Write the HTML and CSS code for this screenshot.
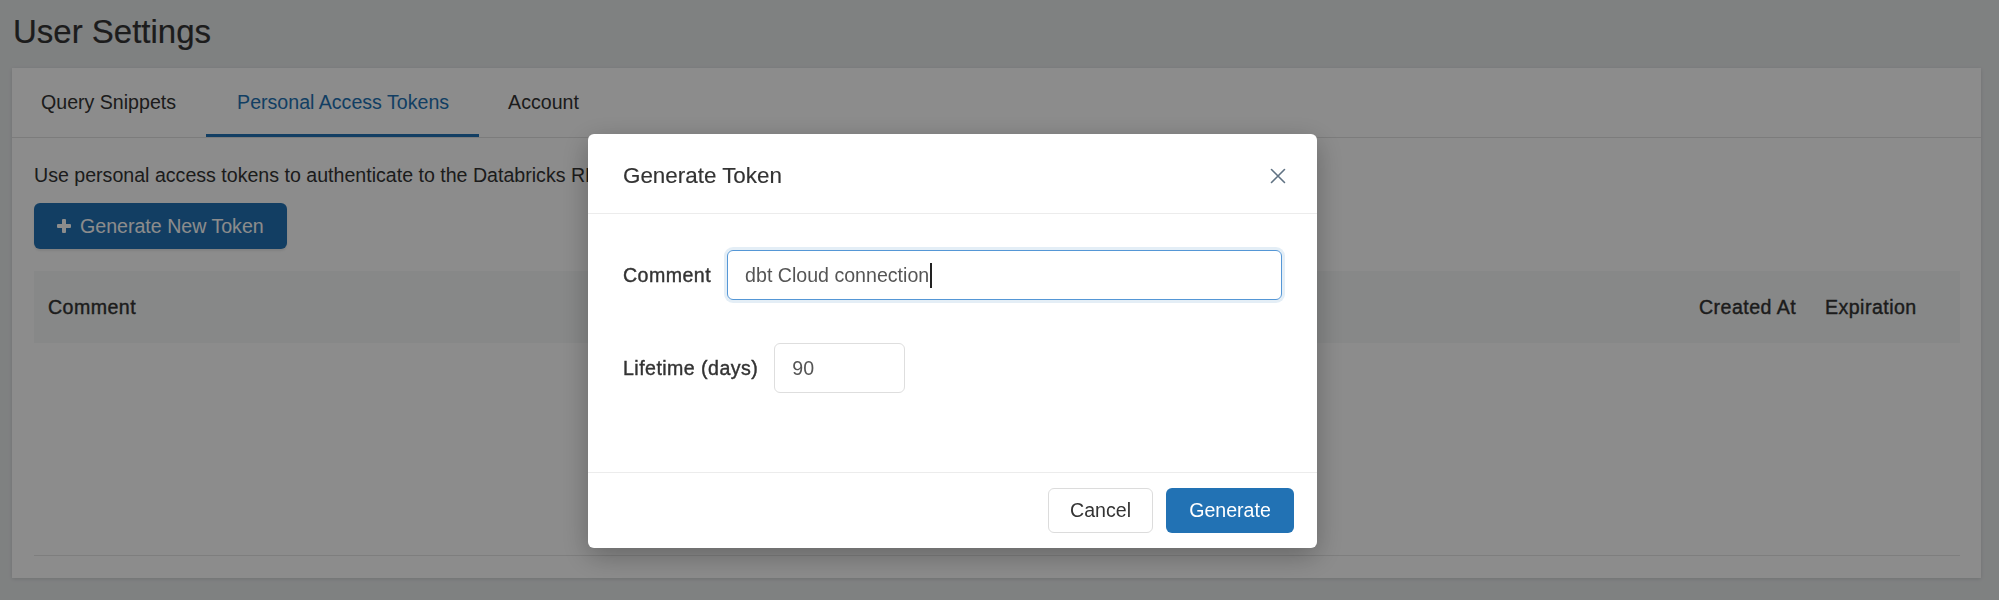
FILE: index.html
```html
<!DOCTYPE html>
<html lang="en">
<head>
<meta charset="utf-8">
<title>User Settings</title>
<link rel="stylesheet" href="styles.css">
</head>
<body>
<div class="page">
  <h1 class="page-title">User Settings</h1>
  <div class="card">
    <div class="tabs">
      <div class="tab">Query Snippets</div>
      <div class="tab active">Personal Access Tokens</div>
      <div class="tab">Account</div>
    </div>
    <div class="tab-body">
      <p class="desc">Use personal access tokens to authenticate to the Databricks REST API.</p>
      <button class="btn btn-primary btn-new" type="button">
        <svg class="plus" width="14" height="14" viewBox="0 0 14 14" aria-hidden="true">
          <rect x="5" y="0" width="4" height="14" rx="1" fill="currentColor"/>
          <rect x="0" y="5" width="14" height="4" rx="1" fill="currentColor"/>
        </svg>
        <span>Generate New Token</span>
      </button>
      <div class="table">
        <div class="thead">
          <div class="th th-comment">Comment</div>
          <div class="th th-created">Created At</div>
          <div class="th th-exp">Expiration</div>
        </div>
        <div class="tbody"></div>
      </div>
    </div>
  </div>
</div>

<div class="overlay">
  <div class="modal" role="dialog" aria-label="Generate Token">
    <div class="modal-header">
      <div class="modal-title">Generate Token</div>
      <svg class="close" width="16" height="16" viewBox="0 0 16 16" aria-label="Close">
        <path d="M1.5 1.5 L14.5 14.5 M14.5 1.5 L1.5 14.5" stroke="currentColor" stroke-width="1.6" fill="none" stroke-linecap="round"/>
      </svg>
    </div>
    <div class="modal-body">
      <div class="form-row">
        <label class="form-label">Comment</label>
        <div class="field field-focus"><span>dbt Cloud connection</span><span class="caret"></span></div>
      </div>
      <div class="form-row">
        <label class="form-label">Lifetime (days)</label>
        <div class="field field-days"><span>90</span></div>
      </div>
    </div>
    <div class="modal-footer">
      <button class="btn btn-default btn-cancel" type="button">Cancel</button>
      <button class="btn btn-primary btn-generate" type="button">Generate</button>
    </div>
  </div>
</div>
</body>
</html>
```

FILE: styles.css
```css
* {
  box-sizing: border-box;
}

html, body {
  margin: 0;
  padding: 0;
}

body {
  width: 1999px;
  height: 600px;
  overflow: hidden;
  background: #e8ebec;
  font-family: "Liberation Sans", Arial, sans-serif;
  color: #333;
  font-size: 19.6px;
}

.page {
  padding: 12px 18px 0 12px;
}

.page-title {
  margin: 0 0 16px 1px;
  font-size: 33px;
  line-height: 40px;
  font-weight: 400;
  color: #333;
  -webkit-text-stroke: 0.2px #333;
}

.card {
  background: #fff;
  box-shadow: 0 1px 4px rgba(0, 0, 0, 0.12);
}

.tabs {
  display: flex;
  height: 70px;
  border-bottom: 1px solid #e2e2e2;
}

.tab {
  padding: 0 30px 0 29px;
  line-height: 69px;
  height: 69px;
  color: #333;
}

.tab.active {
  color: #2272b4;
  box-shadow: inset 0 -3px 0 #2272b4;
  padding: 0 30px 0 31px;
}

.tab-body {
  display: flex;
  flex-direction: column;
  align-items: flex-start;
  padding: 23px 21px 22px 22px;
}

.desc {
  margin: 0;
  line-height: 28px;
  height: 28px;
  white-space: nowrap;
}

.btn {
  font-family: inherit;
  font-size: 19.6px;
  border-radius: 6px;
  cursor: pointer;
  display: inline-flex;
  align-items: center;
  justify-content: center;
}

.btn-primary {
  background: #2272b4;
  color: #fff;
  border: none;
}

.btn-default {
  background: #fff;
  color: #333;
  border: 1px solid #dcdcdc;
}

.btn-new {
  margin-top: 14px;
  height: 46px;
  padding: 0 23px 0 23px;
  gap: 9px;
  box-shadow: 0 2px 2px rgba(0, 0, 0, 0.08);
}

.plus {
  display: block;
}

.table {
  align-self: stretch;
  margin-top: 22px;
}

.thead {
  display: flex;
  align-items: center;
  height: 72px;
  background: #f6f8f8;
  color: #333;
}

.th {
  font-weight: 400;
  letter-spacing: 0.45px;
  -webkit-text-stroke: 0.4px #333;
}

.th-comment {
  flex: 1;
  padding-left: 14px;
}

.th-created {
  width: 126px;
}

.th-exp {
  width: 135px;
}

.tbody {
  height: 213px;
  border-bottom: 1px solid #e6e6e6;
}

/* Modal */
.overlay {
  position: fixed;
  inset: 0;
  background: rgba(0, 0, 0, 0.45);
}

.modal {
  position: absolute;
  left: 588px;
  top: 134px;
  width: 729px;
  background: #fff;
  border-radius: 6px;
  box-shadow: 0 8px 28px rgba(0, 0, 0, 0.28);
}

.modal-header {
  height: 80px;
  padding: 4px 31px 0 35px;
  display: flex;
  align-items: center;
  justify-content: space-between;
  border-bottom: 1px solid #ececec;
}

.modal-title {
  font-size: 22.4px;
  color: #333;
  -webkit-text-stroke: 0.15px #333;
}

.close {
  color: #607283;
  display: block;
}

.modal-body {
  height: 258px;
  padding: 36px 35px 0 35px;
}

.form-row {
  display: flex;
  align-items: center;
}

.form-row + .form-row {
  margin-top: 43px;
}

.form-label {
  font-weight: 400;
  color: #333;
  letter-spacing: 0.45px;
  -webkit-text-stroke: 0.4px #333;
  margin-right: 16px;
}

.field {
  height: 50px;
  border: 1px solid #dedede;
  border-radius: 6px;
  padding: 0 17px;
  display: flex;
  align-items: center;
  color: #555;
}

.field-focus {
  flex: 1;
  border-color: #5597d6;
  box-shadow: 0 0 0 3px rgba(34, 114, 180, 0.12);
}

.field-days {
  width: 131px;
}

.caret {
  display: inline-block;
  width: 1.5px;
  height: 25px;
  background: #222;
  margin-left: 1px;
}

.modal-footer {
  height: 76px;
  border-top: 1px solid #ececec;
  display: flex;
  align-items: center;
  justify-content: flex-end;
  gap: 13px;
  padding: 0 23px 0 0;
}

.btn-cancel {
  width: 105px;
  height: 45px;
}

.btn-generate {
  width: 128px;
  height: 45px;
}
```
